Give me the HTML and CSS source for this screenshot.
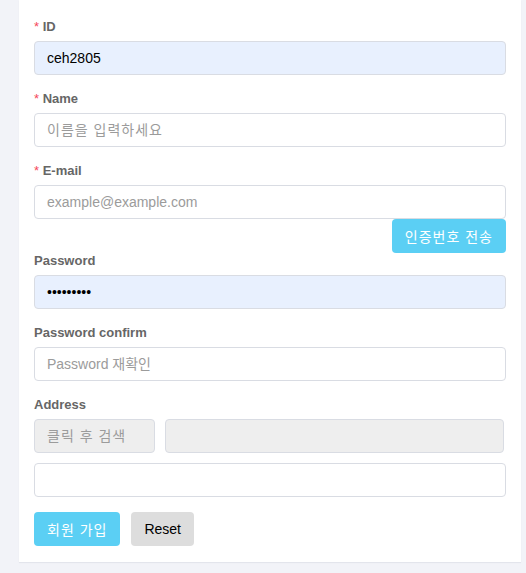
FILE: index.html
```html
<!DOCTYPE html>
<html>
    <head>
        <meta charset="UTF-8">
        <meta name="viewport" content="width=device-width, initial-scale=1.0">
        <title>회원 가입</title>
        <link rel="stylesheet" href="styles.css">
    </head>
    <body>
        <div class="card">
            <form class="joinform" onsubmit="return false">
                <div class="field">
                    <label><span class="req">*</span> ID</label>
                    <input class="forminput filled" value="ceh2805">
                </div>
                <div class="field">
                    <label><span class="req">*</span> Name</label>
                    <input class="forminput ko" placeholder="이름을 입력하세요">
                </div>
                <div class="field">
                    <label><span class="req">*</span> E-mail</label>
                    <input class="forminput" placeholder="example@example.com">
                    <div class="sendrow">
                        <button class="btn btninfo">인증번호 전송</button>
                    </div>
                </div>
                <div class="field">
                    <label>Password</label>
                    <input type="password" class="forminput filled" value="123456789">
                </div>
                <div class="field">
                    <label>Password confirm</label>
                    <input type="password" class="forminput" placeholder="Password 재확인">
                </div>
                <div class="field">
                    <label>Address</label>
                    <div class="addrrow">
                        <input class="forminput grey ko" placeholder="클릭 후 검색" readonly>
                        <input class="forminput grey" readonly>
                    </div>
                    <input class="forminput addrdetail">
                </div>
                <div class="btnrow">
                    <button class="btn btninfo">회원 가입</button>
                    <button class="btn btnreset" type="reset">Reset</button>
                </div>
            </form>
        </div>
    </body>
</html>
```

FILE: styles.css
```css
*{
    font-family: "Liberation Sans", "Noto Sans CJK KR", sans-serif;
    box-sizing: border-box;
}
body{
    margin: 0;
    background-color: #f2f3f8;
    padding: 0 5px 11px 19px;
}
.card{
    background-color: white;
    width: 502px;
    padding: 15px 15px 16px 15px;
    box-shadow: 0 1px 1px #e3e5ec;
}
.joinform{
    display: flex;
    flex-direction: column;
    gap: 12px;
}
.field{
    display: flex;
    flex-direction: column;
}
.field label{
    font-size: 13px;
    font-weight: bold;
    color: #666;
    line-height: 20px;
    padding-top: 2px;
    margin-bottom: 4px;
}
.req{
    color: #f5475b;
    font-weight: normal;
}
.forminput{
    height: 34px;
    width: 100%;
    border: solid 1px #d9dce3;
    border-radius: 4px;
    padding: 0 12px;
    font-size: 14px;
    color: black;
    background-color: white;
    outline: none;
}
.forminput::placeholder{
    color: #9b9b9b;
}
.ko::placeholder{
    letter-spacing: 1px;
}
.filled{
    background-color: #e8f0fe;
}
.grey{
    background-color: #eeeeee;
}
.sendrow{
    display: flex;
    justify-content: flex-end;
    margin-bottom: -16px;
}
.addrrow{
    display: grid;
    grid-template-columns: 121px 1fr;
    gap: 10px;
    margin-right: 2px;
}
.addrdetail{
    margin-top: 10px;
}
.btnrow{
    display: flex;
    gap: 11px;
    margin-top: 3px;
}
.btn{
    height: 34px;
    border: none;
    border-radius: 4px;
    font-size: 14px;
    padding: 0 13px;
    cursor: pointer;
}
.btninfo{
    background-color: #5bcff4;
    color: white;
    letter-spacing: 1px;
}
.btnreset{
    background-color: #dddddd;
    color: black;
}
```
